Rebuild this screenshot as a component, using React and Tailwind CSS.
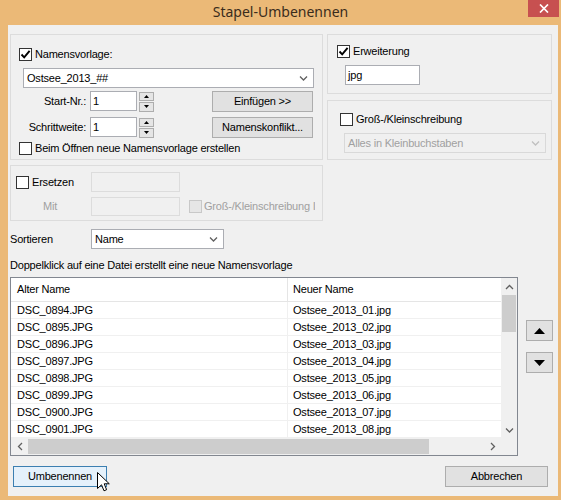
import React from "react";

const rows = [
  ["DSC_0894.JPG", "Ostsee_2013_01.jpg"],
  ["DSC_0895.JPG", "Ostsee_2013_02.jpg"],
  ["DSC_0896.JPG", "Ostsee_2013_03.jpg"],
  ["DSC_0897.JPG", "Ostsee_2013_04.jpg"],
  ["DSC_0898.JPG", "Ostsee_2013_05.jpg"],
  ["DSC_0899.JPG", "Ostsee_2013_06.jpg"],
  ["DSC_0900.JPG", "Ostsee_2013_07.jpg"],
  ["DSC_0901.JPG", "Ostsee_2013_08.jpg"],
];

function CheckBox({ checked, disabled }) {
  return (
    <div
      className={`w-[13px] h-[13px] shrink-0 border flex items-center justify-center ${
        disabled ? "border-[#c8c8c8] bg-[#e6e6e6]" : "border-[#333333] bg-white"
      }`}
    >
      {checked && (
        <svg width="11" height="11" viewBox="0 0 11 11">
          <path d="M1.5 5.5 L4.2 8.4 L9.6 1.8" fill="none" stroke="#000" strokeWidth="1.9" />
        </svg>
      )}
    </div>
  );
}

function Chevron({ dir = "down", color = "#606060" }) {
  const d = {
    down: "M1 1.5 L4.5 5 L8 1.5",
    up: "M1 5 L4.5 1.5 L8 5",
  }[dir];
  if (dir === "left" || dir === "right") {
    return (
      <svg width="6" height="9" viewBox="0 0 6 9">
        <path
          d={dir === "left" ? "M5 1 L1.5 4.5 L5 8" : "M1 1 L4.5 4.5 L1 8"}
          fill="none"
          stroke={color}
          strokeWidth="1.3"
        />
      </svg>
    );
  }
  return (
    <svg width="9" height="6" viewBox="0 0 9 6">
      <path d={d} fill="none" stroke={color} strokeWidth="1.3" />
    </svg>
  );
}

function Combo({ text, className, disabled }) {
  return (
    <div
      className={`flex items-center justify-between pl-[3px] pr-[5px] border ${
        disabled ? "border-[#d9d9d9] bg-[#f0f0f0] text-[#a0a0a0]" : "border-[#abadb3] bg-white"
      } ${className}`}
    >
      <span>{text}</span>
      <Chevron color={disabled ? "#c0c0c0" : "#606060"} />
    </div>
  );
}

function Input({ text, className, disabled }) {
  return (
    <div
      className={`flex items-center pl-[2px] border ${
        disabled ? "border-[#dcdcdc] bg-[#f0f0f0]" : "border-[#abadb3] bg-white"
      } ${className}`}
    >
      {text}
    </div>
  );
}

function Spin() {
  return (
    <div className="w-[15px] h-[20px] flex flex-col gap-[1px] ml-[2px]">
      <div className="flex-1 border border-[#adadad] bg-[#e5e5e5] flex items-center justify-center">
        <svg width="5" height="3" viewBox="0 0 5 3">
          <path d="M0 3 L2.5 0 L5 3 Z" fill="#000" />
        </svg>
      </div>
      <div className="flex-1 border border-[#adadad] bg-[#e5e5e5] flex items-center justify-center">
        <svg width="5" height="3" viewBox="0 0 5 3">
          <path d="M0 0 L5 0 L2.5 3 Z" fill="#000" />
        </svg>
      </div>
    </div>
  );
}

function Btn({ children, className }) {
  return (
    <div
      className={`flex items-center justify-center border border-[#adadad] bg-[#e1e1e1] ${className}`}
    >
      {children}
    </div>
  );
}

export default function App() {
  return (
    <div className="w-[561px] h-[500px] bg-[#ebb977] flex flex-col font-['Liberation_Sans',Arial,sans-serif] text-[11px] tracking-[-0.2px] text-black leading-none overflow-hidden">
      <div className="h-[25px] grid grid-cols-[1fr_auto_1fr] items-center">
        <div />
        <div className="font-['Noto_Sans',sans-serif] text-[14px] tracking-normal text-[#3a2c1c] -mt-[1px]">
          Stapel-Umbenennen
        </div>
        <div className="flex justify-end self-start">
          <div className="w-[31px] h-[17px] mr-[2px] bg-[#c75050] flex items-center justify-center">
            <svg width="10" height="9" viewBox="0 0 10 9">
              <path d="M1 0.5 L9 8.5 M9 0.5 L1 8.5" stroke="#fff" strokeWidth="1.7" />
            </svg>
          </div>
        </div>
      </div>

      <div className="ml-[8px] mr-[3px] h-[471px] bg-[#f0f0f0] pl-[2px] flex flex-col">
        <div className="mt-[9px] flex gap-[4px]">
          {/* Namensvorlage */}
          <div className="w-[313px] h-[126px] border border-[#dcdcdc] flex flex-col">
            <div className="mt-[13px] ml-[8px] h-[13px] flex items-center">
              <CheckBox checked />
              <span className="ml-[3px]">Namensvorlage:</span>
            </div>
            <Combo text="Ostsee_2013_##" className="mt-[7px] ml-[12px] w-[291px] h-[20px]" />
            <div className="mt-[3px] h-[21px] flex items-center">
              <div className="w-[75px] text-right">Start-Nr.:</div>
              <Input text="1" className="ml-[4px] w-[47px] h-[20px] self-start" />
              <Spin />
              <Btn className="ml-[58px] w-[101px] h-[21px]">Einfügen &gt;&gt;</Btn>
            </div>
            <div className="mt-[5px] h-[21px] flex items-center">
              <div className="w-[75px] text-right">Schrittweite:</div>
              <Input text="1" className="ml-[4px] w-[47px] h-[20px] self-start" />
              <Spin />
              <Btn className="ml-[58px] w-[101px] h-[21px]">Namenskonflikt...</Btn>
            </div>
            <div className="mt-[4px] ml-[8px] h-[13px] flex items-center">
              <CheckBox />
              <span className="ml-[3px]">Beim Öffnen neue Namensvorlage erstellen</span>
            </div>
          </div>

          <div className="w-[225px] flex flex-col gap-[6px]">
            <div className="h-[60px] border border-[#dcdcdc] flex flex-col">
              <div className="mt-[10px] ml-[9px] h-[13px] flex items-center">
                <CheckBox checked />
                <span className="ml-[3px]">Erweiterung</span>
              </div>
              <Input text="jpg" className="mt-[7px] ml-[17px] w-[75px] h-[20px]" />
            </div>
            <div className="h-[60px] border border-[#dcdcdc] flex flex-col">
              <div className="mt-[12px] ml-[12px] h-[13px] flex items-center">
                <CheckBox />
                <span className="ml-[3px]">Groß-/Kleinschreibung</span>
              </div>
              <Combo
                text="Alles in Kleinbuchstaben"
                disabled
                className="mt-[7px] ml-[16px] w-[202px] h-[20px]"
              />
            </div>
          </div>
        </div>

        {/* Ersetzen */}
        <div className="mt-[5px] w-[313px] h-[56px] border border-[#dcdcdc] flex flex-col">
          <div className="mt-[6px] ml-[5px] h-[20px] flex items-center">
            <div className="w-[75px] flex items-center">
              <CheckBox />
              <span className="ml-[3px]">Ersetzen</span>
            </div>
            <Input disabled className="w-[89px] h-[20px]" />
          </div>
          <div className="mt-[5px] ml-[5px] h-[19px] flex items-center">
            <div className="w-[75px] pl-[27px] text-[#a0a0a0]">Mit</div>
            <Input disabled className="w-[89px] h-[19px]" />
            <div className="ml-[9px]">
              <CheckBox disabled />
            </div>
            <span className="ml-[2px] w-[111px] overflow-hidden whitespace-nowrap text-[#a0a0a0]">
              Groß-/Kleinschreibung I
            </span>
          </div>
        </div>

        <div className="mt-[8px] h-[20px] flex items-center">
          <div className="w-[81px]">Sortieren</div>
          <Combo text="Name" className="w-[133px] h-[20px]" />
        </div>

        <div className="mt-[9px] h-[14px] leading-[14px]">
          Doppelklick auf eine Datei erstellt eine neue Namensvorlage
        </div>

        <div className="mt-[5px] flex items-start">
          <div className="w-[508px] h-[179px] border border-[#828790] bg-white flex flex-col">
            <div className="flex h-[160px]">
              <div className="w-[490px] flex flex-col">
                <div className="h-[24px] flex border-b border-[#e5e5e5]">
                  <div className="w-[277px] pl-[6px] flex items-center border-r border-[#e5e5e5]">
                    Alter Name
                  </div>
                  <div className="flex-1 pl-[5px] flex items-center">Neuer Name</div>
                </div>
                {rows.map(([a, b]) => (
                  <div key={a} className="h-[17px] flex border-b border-[#f0f0f0]">
                    <div className="w-[277px] pl-[6px] flex items-center border-r border-[#f0f0f0]">
                      {a}
                    </div>
                    <div className="flex-1 pl-[5px] flex items-center">{b}</div>
                  </div>
                ))}
              </div>
              <div className="w-[16px] bg-[#f0f0f0] flex flex-col">
                <div className="h-[17px] flex items-center justify-center">
                  <Chevron dir="up" />
                </div>
                <div className="mx-[1px] h-[37px] bg-[#cdcdcd]" />
                <div className="flex-1" />
                <div className="h-[17px] flex items-center justify-center">
                  <Chevron dir="down" />
                </div>
              </div>
            </div>
            <div className="h-[17px] flex bg-[#f0f0f0]">
              <div className="w-[17px] flex items-center justify-center">
                <Chevron dir="left" />
              </div>
              <div className="w-[401px] my-[1px] bg-[#cdcdcd]" />
              <div className="flex-1" />
              <div className="w-[17px] flex items-center justify-center">
                <Chevron dir="right" />
              </div>
              <div className="w-[16px]" />
            </div>
          </div>

          <div className="ml-[8px] mt-[43px] flex flex-col gap-[11px]">
            <Btn className="w-[27px] h-[21px]">
              <svg width="11" height="6" viewBox="0 0 11 6">
                <path d="M0 6 L5.5 0 L11 6 Z" fill="#000" />
              </svg>
            </Btn>
            <Btn className="w-[27px] h-[21px]">
              <svg width="11" height="6" viewBox="0 0 11 6">
                <path d="M0 0 L11 0 L5.5 6 Z" fill="#000" />
              </svg>
            </Btn>
          </div>
        </div>

        <div className="mt-[10px] flex justify-between">
          <div className="relative ml-[3px] w-[94px] h-[21px] border border-[#3c7fb1] bg-[#e5f1fb] flex items-center justify-center">
            Umbenennen
            <svg
              className="absolute left-[83px] top-[5px]"
              width="13"
              height="20"
              viewBox="0 0 13 20"
            >
              <path
                d="M0.5 0.5 L0.5 16.5 L4.5 12.8 L7 18.8 L9.6 17.7 L7.2 11.8 L12.3 11.8 Z"
                fill="#fff"
                stroke="#000"
                strokeWidth="1"
                strokeLinejoin="round"
              />
            </svg>
          </div>
          <Btn className="mr-[10px] w-[103px] h-[21px]">Abbrechen</Btn>
        </div>
      </div>
    </div>
  );
}
